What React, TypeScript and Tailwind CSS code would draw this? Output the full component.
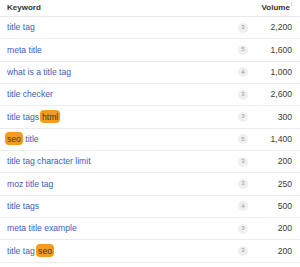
import React from "react";

type Row = { kw: React.ReactNode; n: number; vol: string };

const Hl = ({ children, className = "" }: { children: React.ReactNode; className?: string }) => (
  <span className={`bg-[#f39c1f] text-[#3a3a3a] rounded-[4px] px-[2px] py-[1.5px] ${className}`}>{children}</span>
);

const rows: Row[] = [
  { kw: "title tag", n: 3, vol: "2,200" },
  { kw: "meta title", n: 5, vol: "1,600" },
  { kw: "what is a title tag", n: 4, vol: "1,000" },
  { kw: "title checker", n: 3, vol: "2,600" },
  { kw: <>title tags<Hl className="ml-[1px]">html</Hl></>, n: 3, vol: "300" },
  { kw: <><Hl className="-ml-[2px]">seo</Hl> title</>, n: 5, vol: "1,400" },
  { kw: "title tag character limit", n: 3, vol: "200" },
  { kw: "moz title tag", n: 3, vol: "250" },
  { kw: "title tags", n: 4, vol: "500" },
  { kw: "meta title example", n: 3, vol: "200" },
  { kw: <>title tag <Hl className="-ml-[1px]">seo</Hl></>, n: 3, vol: "200" },
];

export default function App() {
  return (
    <div className="w-[300px] h-[267px] bg-white overflow-hidden" style={{ fontFamily: '"Liberation Sans", Arial, sans-serif' }}>
      <div className="h-[17px] flex items-center border-b border-[#e9e9e9] pl-[7px] pr-[8px]">
        <div className="flex-1 text-[8px] font-bold text-[#333]">Keyword</div>
        <div className="text-[8px] font-bold text-[#333] flex items-start">
          Volume<span className="text-[5px] font-normal text-[#999] ml-[1px] -mt-[1px]">i</span>
        </div>
      </div>
      {rows.map((r, i) => (
        <div key={i} className="h-[22.33px] flex items-center border-b border-[#ececec] pl-[7px] pr-[8px]">
          <div className="flex-1 text-[8.6px] text-[#3b5cbd] whitespace-nowrap">{r.kw}</div>
          <div className="w-[10px] h-[10px] rounded-full bg-[#efefef] text-[#999] text-[6px] flex items-center justify-center mr-[4px]">
            {r.n}
          </div>
          <div className="w-[40px] text-right text-[8.6px] text-[#3a3a3a]">{r.vol}</div>
        </div>
      ))}
    </div>
  );
}
